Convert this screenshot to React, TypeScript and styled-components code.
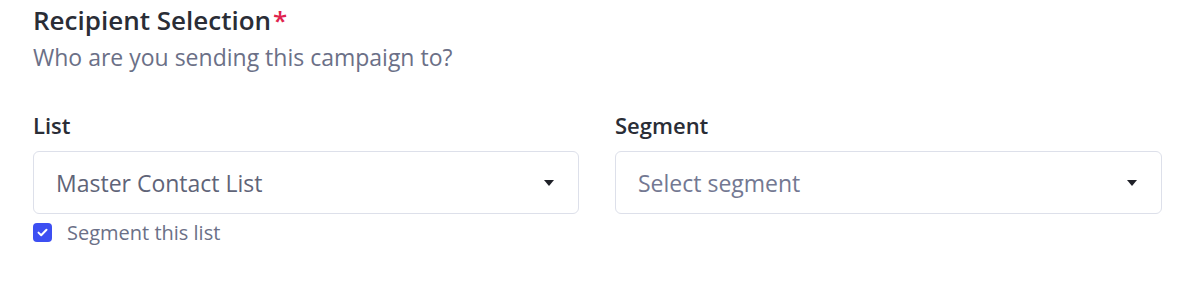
import { createGlobalStyle, styled } from "styled-components";

const GlobalStyle = createGlobalStyle`
    html, body {
        margin: 0;
        padding: 0;
        background: #ffffff;
    }
    body {
        font-family: "Open Sans", Roboto, "Liberation Sans", sans-serif;
        color: #2b2f38;
    }
`

const Page = styled.div`
    padding: 3px 38px 0 33px;
    width: 1200px;
    box-sizing: border-box;
`

const Title = styled.h2`
    margin: 0;
    font-size: 26px;
    line-height: 34px;
    font-weight: 600;
    color: #2a2d36;
`

const Required = styled.span`
    color: #e0234e;
    margin-left: 2px;
`

const Subtitle = styled.p`
    margin: 5px 0 0;
    font-size: 23px;
    line-height: 30px;
    color: #6b7087;
`

const Fields = styled.div`
    display: grid;
    grid-template-columns: 546px 547px;
    column-gap: 36px;
    margin-top: 39px;
`

const Field = styled.div`
    display: flex;
    flex-direction: column;
`

const Label = styled.label`
    font-size: 22px;
    line-height: 28px;
    font-weight: 600;
    color: #2a2d36;
    margin-bottom: 12px;
`

const SelectBox = styled.div<{ $placeholder?: boolean }>`
    display: flex;
    align-items: center;
    justify-content: space-between;
    height: 63px;
    box-sizing: border-box;
    padding: 0 24px 0 22px;
    border: 1.5px solid #dde0ea;
    border-radius: 6px;
    background: #ffffff;
    font-size: 23px;
    color: ${props => props.$placeholder ? "#737892" : "#5f6478"};
`

const Caret = styled.span`
    width: 0;
    height: 0;
    border-left: 5.5px solid transparent;
    border-right: 5.5px solid transparent;
    border-top: 6px solid #1f2128;
`

const CheckRow = styled.div`
    display: flex;
    align-items: center;
    gap: 15px;
    margin-top: 5px;
`

const CheckBox = styled.span`
    display: flex;
    align-items: center;
    justify-content: center;
    width: 19px;
    height: 19px;
    border-radius: 4px;
    background: #3d4ff2;
`

const CheckText = styled.span`
    font-size: 20px;
    color: #6b7087;
`

const App = () => {
    return (
        <>
            <GlobalStyle />
            <Page>
                <Title>Recipient Selection<Required>*</Required></Title>
                <Subtitle>Who are you sending this campaign to?</Subtitle>
                <Fields>
                    <Field>
                        <Label>List</Label>
                        <SelectBox>
                            Master Contact List
                            <Caret />
                        </SelectBox>
                        <CheckRow>
                            <CheckBox>
                                <svg width="11" height="9" viewBox="0 0 11 9">
                                    <path d="M1.5 4.6 L4.2 7.2 L9.5 1.8" fill="none" stroke="#ffffff" strokeWidth="2" strokeLinecap="round" strokeLinejoin="round" />
                                </svg>
                            </CheckBox>
                            <CheckText>Segment this list</CheckText>
                        </CheckRow>
                    </Field>
                    <Field>
                        <Label>Segment</Label>
                        <SelectBox $placeholder>
                            Select segment
                            <Caret />
                        </SelectBox>
                    </Field>
                </Fields>
            </Page>
        </>
    );
}

export default App;
